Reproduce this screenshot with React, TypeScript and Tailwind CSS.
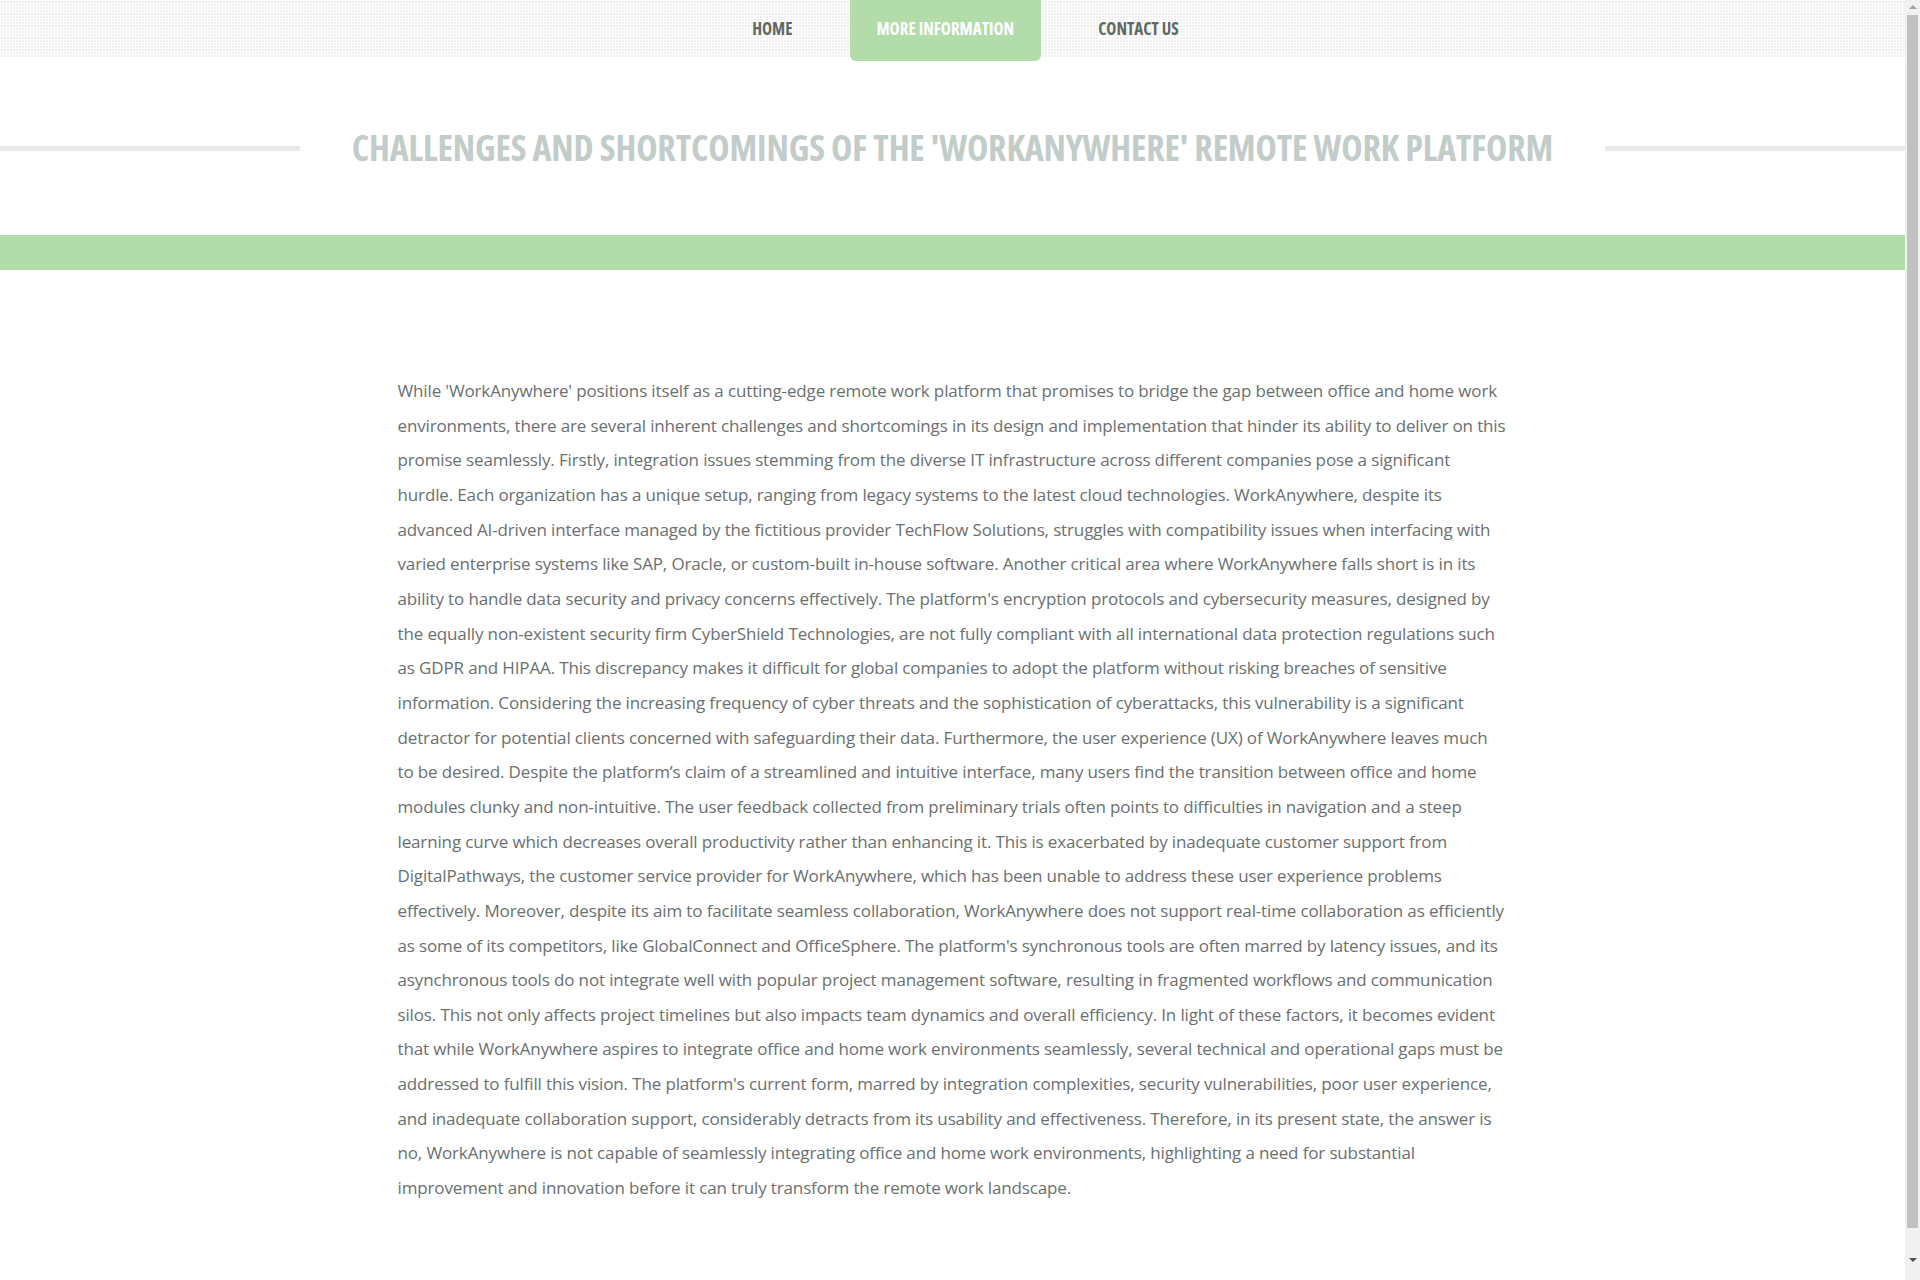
const paragraph =
  "While 'WorkAnywhere' positions itself as a cutting-edge remote work platform that promises to bridge the gap between office and home work environments, there are several inherent challenges and shortcomings in its design and implementation that hinder its ability to deliver on this promise seamlessly. Firstly, integration issues stemming from the diverse IT infrastructure across different companies pose a significant hurdle. Each organization has a unique setup, ranging from legacy systems to the latest cloud technologies. WorkAnywhere, despite its advanced AI-driven interface managed by the fictitious provider TechFlow Solutions, struggles with compatibility issues when interfacing with varied enterprise systems like SAP, Oracle, or custom-built in-house software. Another critical area where WorkAnywhere falls short is in its ability to handle data security and privacy concerns effectively. The platform's encryption protocols and cybersecurity measures, designed by the equally non-existent security firm CyberShield Technologies, are not fully compliant with all international data protection regulations such as GDPR and HIPAA. This discrepancy makes it difficult for global companies to adopt the platform without risking breaches of sensitive information. Considering the increasing frequency of cyber threats and the sophistication of cyberattacks, this vulnerability is a significant detractor for potential clients concerned with safeguarding their data. Furthermore, the user experience (UX) of WorkAnywhere leaves much to be desired. Despite the platform\u2019s claim of a streamlined and intuitive interface, many users find the transition between office and home modules clunky and non-intuitive. The user feedback collected from preliminary trials often points to difficulties in navigation and a steep learning curve which decreases overall productivity rather than enhancing it. This is exacerbated by inadequate customer support from DigitalPathways, the customer service provider for WorkAnywhere, which has been unable to address these user experience problems effectively. Moreover, despite its aim to facilitate seamless collaboration, WorkAnywhere does not support real-time collaboration as efficiently as some of its competitors, like GlobalConnect and OfficeSphere. The platform's synchronous tools are often marred by latency issues, and its asynchronous tools do not integrate well with popular project management software, resulting in fragmented workflows and communication silos. This not only affects project timelines but also impacts team dynamics and overall efficiency. In light of these factors, it becomes evident that while WorkAnywhere aspires to integrate office and home work environments seamlessly, several technical and operational gaps must be addressed to fulfill this vision. The platform's current form, marred by integration complexities, security vulnerabilities, poor user experience, and inadequate collaboration support, considerably detracts from its usability and effectiveness. Therefore, in its present state, the answer is no, WorkAnywhere is not capable of seamlessly integrating office and home work environments, highlighting a need for substantial improvement and innovation before it can truly transform the remote work landscape.";

const navItems = [
  { label: 'HOME', active: false },
  { label: 'MORE INFORMATION', active: true },
  { label: 'CONTACT US', active: false },
];

// the browser scrollbar seen in the screenshot
function Scrollbar() {
  return (
    <div className="fixed top-0 right-0 flex h-screen w-[15px] flex-col items-center bg-[#f1f1f1]">
      <span className="mt-[5px] h-0 w-0 border-x-[4px] border-b-[4px] border-x-transparent border-b-[#a3a3a3]" />
      <span className="mt-[6px] h-[1213px] w-[11px] bg-[#c1c1c1]" />
      <span className="mt-[30px] h-0 w-0 border-x-[4px] border-t-[4px] border-x-transparent border-t-[#505050]" />
    </div>
  );
}

export default function App() {
  return (
    <div className="min-h-screen bg-white pr-[15px] font-['Open_Sans',sans-serif]">
      <header className="h-[57px] bg-[#efefef] bg-[linear-gradient(90deg,#fff_1px,transparent_1px),linear-gradient(#fff_1px,transparent_1px)] bg-[size:3px_3px]">
        <nav className="flex items-start justify-center gap-[30px] pl-[26px]">
          {navItems.map((item) => (
            <a
              key={item.label}
              href="#"
              className={
                item.active
                  ? 'flex h-[61px] items-center rounded-b-[6px] bg-[#b2dcaa] px-[27px] pb-[4px] text-[17px] font-bold text-white font-stretch-condensed'
                  : 'flex h-[57px] items-center px-[27px] text-[17px] font-bold text-[#5f6965] font-stretch-condensed'
              }
            >
              {item.label}
            </a>
          ))}
        </nav>
      </header>

      <section className="flex items-center gap-[52px] pt-[62px] pb-[58px]">
        <span className="h-[5px] flex-1 bg-[#e8eae9]" />
        <h1 className="text-[36px] leading-[58px] font-bold tracking-[-0.15px] text-[#c2ccc8] font-stretch-condensed">
          CHALLENGES AND SHORTCOMINGS OF THE 'WORKANYWHERE' REMOTE WORK PLATFORM
        </h1>
        <span className="h-[5px] flex-1 bg-[#e8eae9]" />
      </section>

      <div className="h-[35px] bg-[#b2dcaa]" />

      <main className="mx-auto w-[1110px] pt-[104px] pb-[60px]">
        <p className="text-[17px] leading-[34.65px] tracking-[-0.14px] text-[#6b7071]">{paragraph}</p>
      </main>

      <Scrollbar />
    </div>
  );
}
